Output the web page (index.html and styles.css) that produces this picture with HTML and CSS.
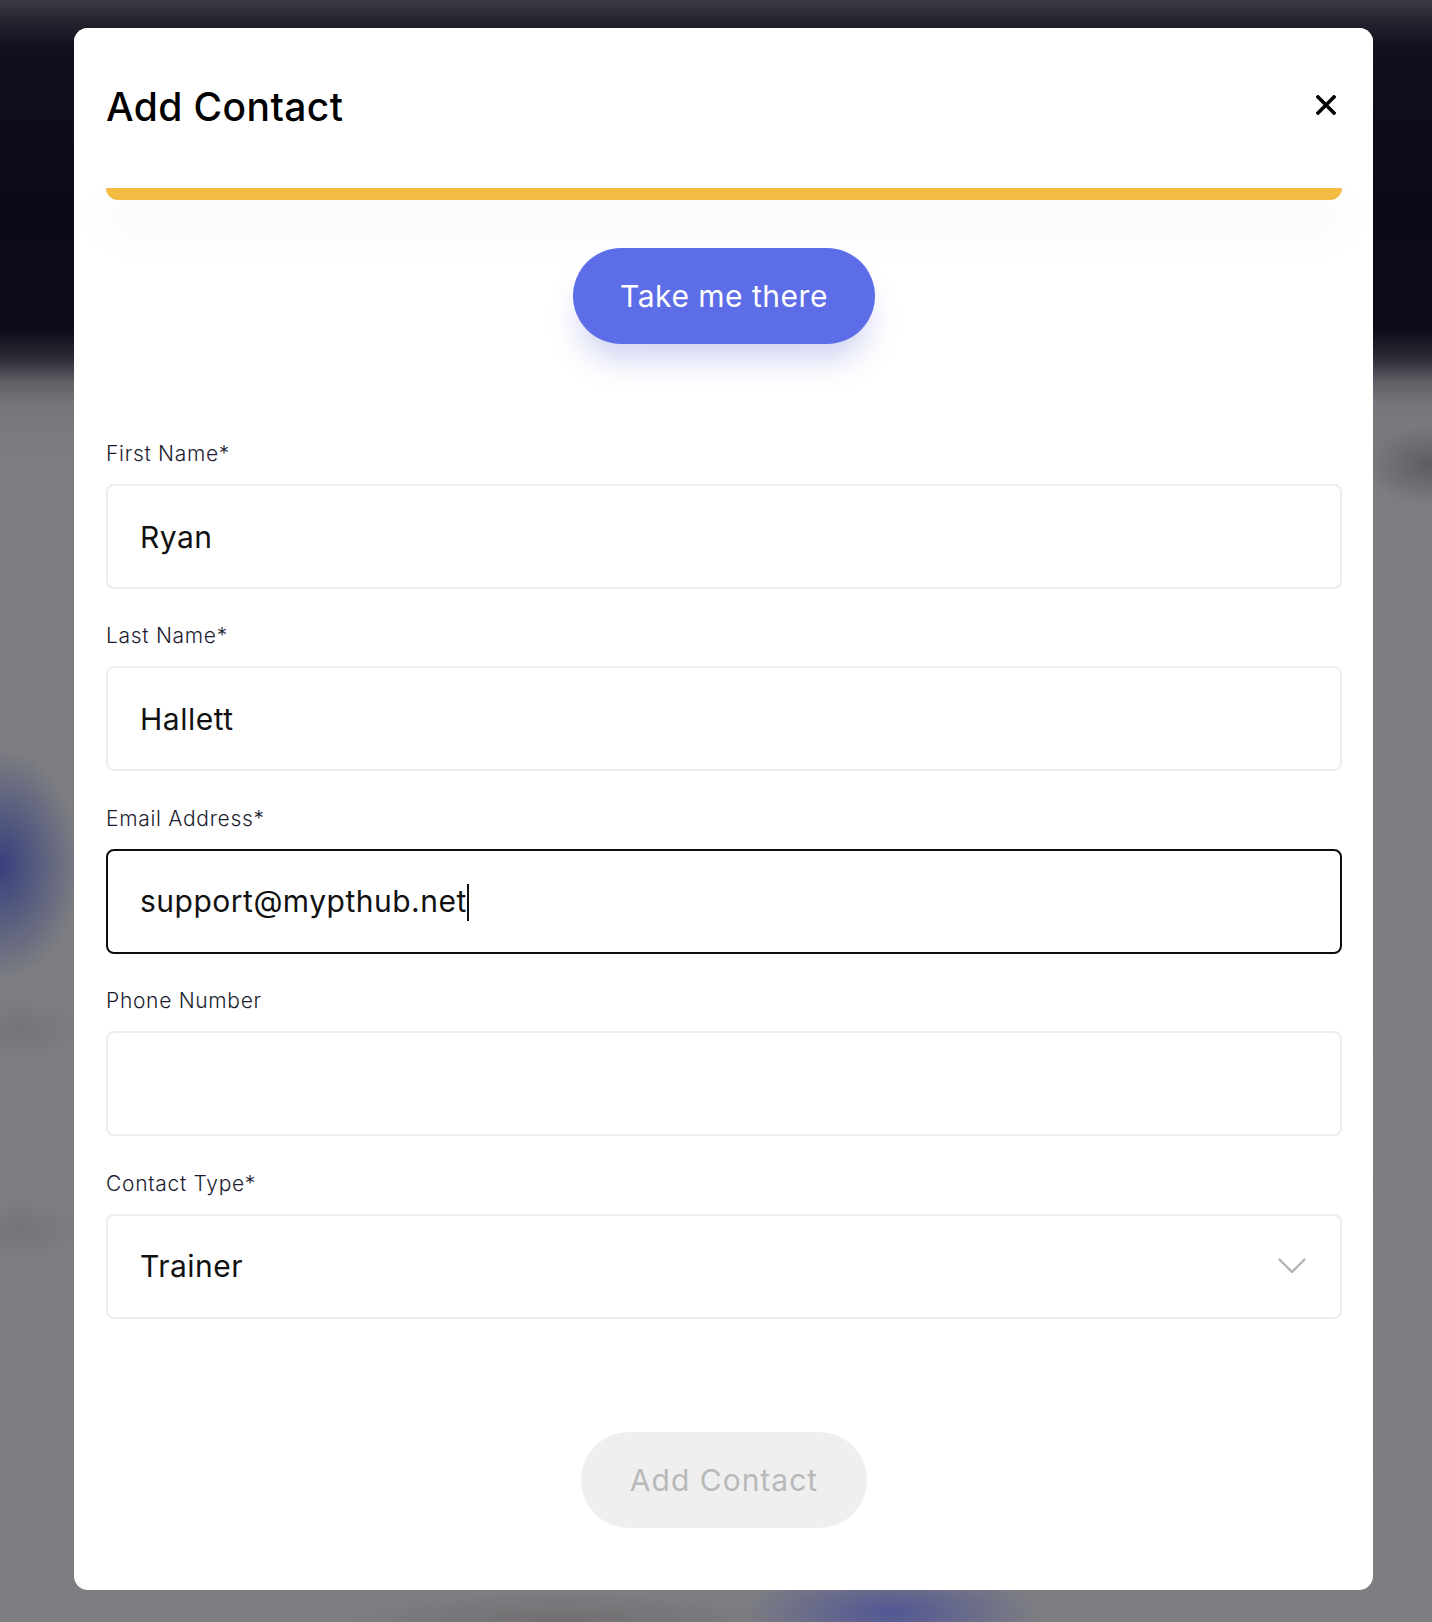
FILE: index.html
```html
<!DOCTYPE html>
<html lang="en">
<head>
<meta charset="utf-8">
<title>Add Contact</title>
<link rel="stylesheet" href="styles.css">
</head>
<body>
<div class="backdrop">
  <div class="modal">
    <header class="modal-header">
      <h1 class="modal-title">Add Contact</h1>
      <button class="close-btn" aria-label="Close">
        <svg width="20" height="20" viewBox="0 0 20 20"><path d="M2 2 L18 18 M18 2 L2 18" stroke="#000" stroke-width="3.6" stroke-linecap="square" fill="none"/></svg>
      </button>
    </header>
    <div class="modal-body">
      <div class="banner-edge"></div>
      <div class="cta-row">
        <button class="btn-primary">Take me there</button>
      </div>
      <form class="form">
        <div class="field">
          <label class="field-label">First Name*</label>
          <div class="field-box">Ryan</div>
        </div>
        <div class="field">
          <label class="field-label">Last Name*</label>
          <div class="field-box">Hallett</div>
        </div>
        <div class="field">
          <label class="field-label">Email Address*</label>
          <div class="field-box is-focused">support@mypthub.net<span class="caret"></span></div>
        </div>
        <div class="field">
          <label class="field-label">Phone Number</label>
          <div class="field-box"></div>
        </div>
        <div class="field">
          <label class="field-label">Contact Type*</label>
          <div class="field-box select">
            <span>Trainer</span>
            <svg class="chevron" width="28" height="16" viewBox="0 0 28 16"><path d="M1.5 1.5 L14 14 L26.5 1.5" stroke="#b3b3b3" stroke-width="2.4" fill="none" stroke-linecap="round" stroke-linejoin="round"/></svg>
          </div>
        </div>
      </form>
      <div class="submit-row">
        <button class="btn-disabled">Add Contact</button>
      </div>
    </div>
  </div>
</div>
</body>
</html>
```

FILE: styles.css
```css
* { box-sizing: border-box; }

html, body {
  margin: 0;
  padding: 0;
}

body {
  width: 1432px;
  height: 1622px;
  overflow: hidden;
  font-family: "Inter", "Liberation Sans", sans-serif;
}

.backdrop {
  width: 1432px;
  height: 1622px;
  padding: 28px 59px 0 74px;
  background:
    radial-gradient(ellipse 150px 45px at 890px 1612px, rgba(78, 82, 150, 0.9), rgba(78, 82, 150, 0) 100%),
    radial-gradient(ellipse 220px 30px at 560px 1622px, rgba(90, 80, 80, 0.35), rgba(90, 80, 80, 0) 100%),
    radial-gradient(ellipse 80px 115px at 0px 865px, rgba(52, 60, 125, 0.95), rgba(52, 60, 125, 0) 100%),
    radial-gradient(ellipse 70px 40px at 1432px 465px, rgba(60, 60, 66, 0.5), rgba(60, 60, 66, 0) 100%),
    radial-gradient(ellipse 60px 30px at 20px 1030px, rgba(100, 100, 104, 0.35), rgba(100, 100, 104, 0) 100%),
    radial-gradient(ellipse 60px 30px at 20px 1230px, rgba(100, 100, 104, 0.35), rgba(100, 100, 104, 0) 100%),
    linear-gradient(to bottom, #3c3b45 0px, #23222e 22px, #100f1c 50px, #0b0a17 200px, #0c0b18 330px, #2b2a35 358px, #5f6066 382px, #76777c 405px, #7c7d81 460px, #7d7e82 100%);
}

.modal {
  width: 1299px;
  height: 1562px;
  background: #fff;
  border-radius: 14px;
  display: flex;
  flex-direction: column;
  overflow: hidden;
}

.modal-header {
  position: relative;
  z-index: 2;
  background: #fff;
  height: 160px;
  flex: none;
  display: flex;
  justify-content: space-between;
  align-items: flex-start;
  padding: 55px 37px 0 32px;
}

.modal-title {
  margin: 0;
  font-size: 39px;
  line-height: 48px;
  font-weight: 550;
  color: #000;
  letter-spacing: 0.4px;
}

.close-btn {
  margin-top: 12px;
  width: 20px;
  height: 20px;
  padding: 0;
  border: 0;
  background: none;
  display: block;
}
.close-btn svg { display: block; }

.modal-body {
  flex: 1;
  display: flex;
  flex-direction: column;
  padding: 0 31px 0 32px;
}

.banner-edge {
  height: 12px;
  background: #f5bc45;
  border-radius: 0 0 12px 12px;
  box-shadow: 0 24px 40px rgba(110, 125, 200, 0.13);
}

.cta-row {
  display: flex;
  justify-content: center;
  margin-top: 48px;
}

.btn-primary {
  width: 302px;
  height: 96px;
  border: 0;
  border-radius: 48px;
  background: #5d6de8;
  color: #fff;
  font-family: inherit;
  font-size: 30px;
  font-weight: 400;
  letter-spacing: 0.5px;
  box-shadow: 0 22px 30px -6px rgba(90, 105, 210, 0.28);
  padding: 0;
}

.form {
  margin-top: 97px;
  display: flex;
  flex-direction: column;
  gap: 34.4px;
}

.field {
  display: flex;
  flex-direction: column;
}

.field-label {
  font-size: 21px;
  line-height: 26px;
  color: #1c1c30;
  font-weight: 300;
  margin-bottom: 17px;
  letter-spacing: 0.7px;
}

.field-box {
  height: 105px;
  border: 2px solid #ededed;
  border-radius: 8px;
  display: flex;
  align-items: center;
  padding: 0 33px 0 32px;
  font-size: 30px;
  color: #111;
  font-weight: 400;
  letter-spacing: 0.5px;
}

.field-box.is-focused {
  border-color: #0d0d0d;
}

.caret {
  display: inline-block;
  width: 2px;
  height: 37px;
  background: #111;
  margin-left: 0;
  transform: translateY(1px);
}

.field-box.select {
  justify-content: space-between;
  padding-right: 34px;
}

.chevron { display: block; }

.submit-row {
  display: flex;
  justify-content: center;
  margin-top: 113px;
}

.btn-disabled {
  width: 286px;
  height: 96px;
  border: 0;
  border-radius: 48px;
  background: #efefef;
  color: #b9b9b9;
  font-family: inherit;
  font-size: 30px;
  font-weight: 400;
  letter-spacing: 1px;
  padding: 0;
}
```
